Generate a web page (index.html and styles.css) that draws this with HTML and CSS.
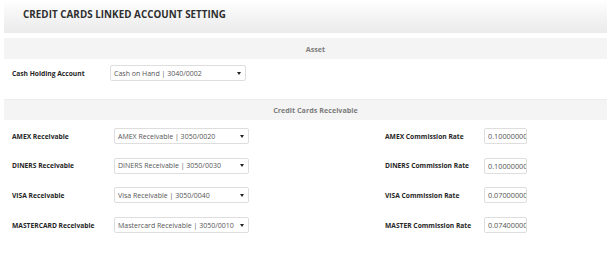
FILE: index.html
```html
<!DOCTYPE html>
<html>
<head>
<meta charset="utf-8">
<link rel="stylesheet" href="styles.css">
</head>
<body>
<div class="page">
  <div class="header"><h1 class="title">CREDIT CARDS LINKED ACCOUNT SETTING</h1></div>

  <div class="bar bar-asset">Asset</div>
  <div class="asset-row">
    <div class="label label-cash">Cash Holding Account</div>
    <div class="select select-cash"><span>Cash on Hand | 3040/0002</span><i class="arrow"></i></div>
  </div>

  <div class="bar bar-cc">Credit Cards Receivable</div>
  <div class="cc-grid">
    <div class="label">AMEX Receivable</div>
    <div class="select"><span>AMEX Receivable | 3050/0020</span><i class="arrow"></i></div>
    <div class="label">AMEX Commission Rate</div>
    <div class="input">0.10000000</div>

    <div class="label">DINERS Receivable</div>
    <div class="select"><span>DINERS Receivable | 3050/0030</span><i class="arrow"></i></div>
    <div class="label">DINERS Commission Rate</div>
    <div class="input">0.10000000</div>

    <div class="label">VISA Receivable</div>
    <div class="select"><span>Visa Receivable | 3050/0040</span><i class="arrow"></i></div>
    <div class="label">VISA Commission Rate</div>
    <div class="input">0.07000000</div>

    <div class="label">MASTERCARD Receivable</div>
    <div class="select"><span>Mastercard Receivable | 3050/0010</span><i class="arrow"></i></div>
    <div class="label">MASTER Commission Rate</div>
    <div class="input">0.07400000</div>
  </div>
</div>
</body>
</html>
```

FILE: styles.css
```css
html, body {
  margin: 0;
  padding: 0;
  background: #ffffff;
  overflow: hidden;
}
body {
  font-family: "Open Sans", "Noto Sans", sans-serif;
  color: #333;
}
.page {
  margin-left: 4px;
  width: 623px;
}
.header {
  height: 33px;
  background: linear-gradient(to bottom, #ffffff 0%, #f4f4f4 50%, #ebebeb 100%);
  display: flex;
  align-items: center;
}
.title {
  margin: 0 0 5px 19px;
  font-size: 9.8px;
  font-weight: 700;
  color: #2e2e2e;
  letter-spacing: 0.05px;
}
.bar {
  height: 21px;
  background: #f4f4f4;
  color: #7c7c7c;
  font-weight: 700;
  font-size: 7.2px;
  display: flex;
  align-items: center;
  justify-content: center;
}
.bar-asset {
  margin-top: 5px;
}
.bar-cc {
  margin-top: 18px;
  border-top: 1px solid #ececec;
  height: 20px;
}
.asset-row {
  display: flex;
  align-items: center;
  padding-left: 8px;
  margin-top: 6px;
}
.label {
  font-size: 6.7px;
  font-weight: 700;
  color: #262626;
  white-space: nowrap;
}
.label-cash {
  width: 98px;
}
.select {
  height: 16px;
  box-sizing: border-box;
  border: 1px solid #dedede;
  border-radius: 2px;
  display: flex;
  align-items: center;
  justify-content: space-between;
  padding: 0 4px 0 3px;
  font-size: 7px;
  color: #555;
  white-space: nowrap;
  overflow: hidden;
}
.select-cash {
  width: 136px;
}
.arrow {
  width: 0;
  height: 0;
  border-left: 2px solid transparent;
  border-right: 2px solid transparent;
  border-top: 3px solid #222;
  flex: none;
}
.cc-grid {
  display: grid;
  grid-template-columns: 102px 135px 136px 99px 43px;
  grid-auto-rows: 16px;
  row-gap: 13.7px;
  align-items: center;
  padding-left: 8px;
  margin-top: 8px;
}
.cc-grid .label:nth-child(4n+3) {
  grid-column: 4;
}
.input {
  height: 16px;
  box-sizing: border-box;
  border: 1px solid #dedede;
  border-radius: 2px;
  font-size: 7.3px;
  color: #555;
  padding-left: 3px;
  display: flex;
  align-items: center;
  overflow: hidden;
  white-space: nowrap;
}
```
